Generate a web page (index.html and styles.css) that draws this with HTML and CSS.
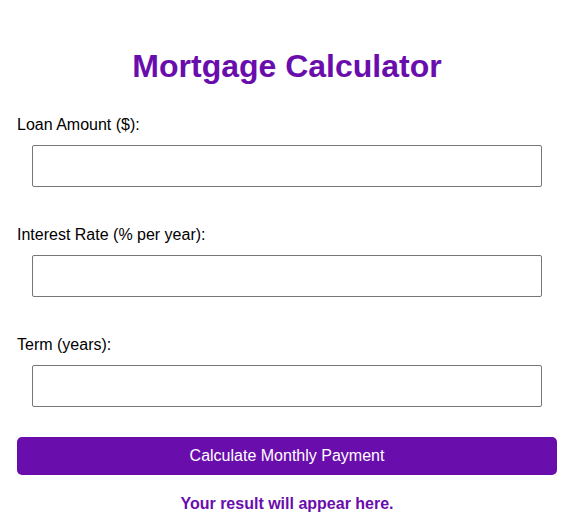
FILE: index.html
```html
<!DOCTYPE html>
<html>
<head>
<meta charset="utf-8">
<link rel="stylesheet" href="styles.css">
</head>
<body>
<div class="calc">
  <h1 class="title">Mortgage Calculator</h1>
  <div class="field">
    <label class="label" for="amount">Loan Amount ($):</label>
    <input class="input" id="amount" type="number">
  </div>
  <div class="field">
    <label class="label" for="rate">Interest Rate (% per year):</label>
    <input class="input" id="rate" type="number">
  </div>
  <div class="field">
    <label class="label" for="term">Term (years):</label>
    <input class="input" id="term" type="number">
  </div>
  <button class="btn" type="button">Calculate Monthly Payment</button>
  <p class="result">Your result will appear here.</p>
</div>
</body>
</html>
```

FILE: styles.css
```css
html, body {
  margin: 0;
  padding: 0;
  background: #ffffff;
}
body {
  font-family: "Liberation Sans", Arial, sans-serif;
  color: #000;
}
.calc {
  width: 540px;
  margin-left: 17px;
  padding-top: 48px;
  display: flex;
  flex-direction: column;
}
.title {
  margin: 0 0 31px;
  font-size: 32px;
  font-weight: bold;
  color: #6a0dad;
  text-align: center;
  line-height: 37px;
}
.field {
  display: flex;
  flex-direction: column;
  margin-bottom: 39px;
}
.label {
  font-size: 16px;
  line-height: 18px;
  margin-bottom: 11px;
}
.input {
  box-sizing: border-box;
  width: 510px;
  height: 42px;
  margin-left: 15px;
  border: 1px solid #767676;
  border-radius: 2px;
  padding: 8px;
  font-size: 16px;
  font-family: inherit;
}
.field:nth-of-type(3) {
  margin-bottom: 30px;
}
.btn {
  height: 38px;
  width: 540px;
  border: none;
  border-radius: 5px;
  background: #6a0dad;
  color: #ffffff;
  font-family: inherit;
  font-size: 16px;
  padding: 0;
}
.result {
  margin: 20px 0 0;
  text-align: center;
  font-size: 16px;
  line-height: 18px;
  font-weight: bold;
  color: #6a0dad;
}
```
